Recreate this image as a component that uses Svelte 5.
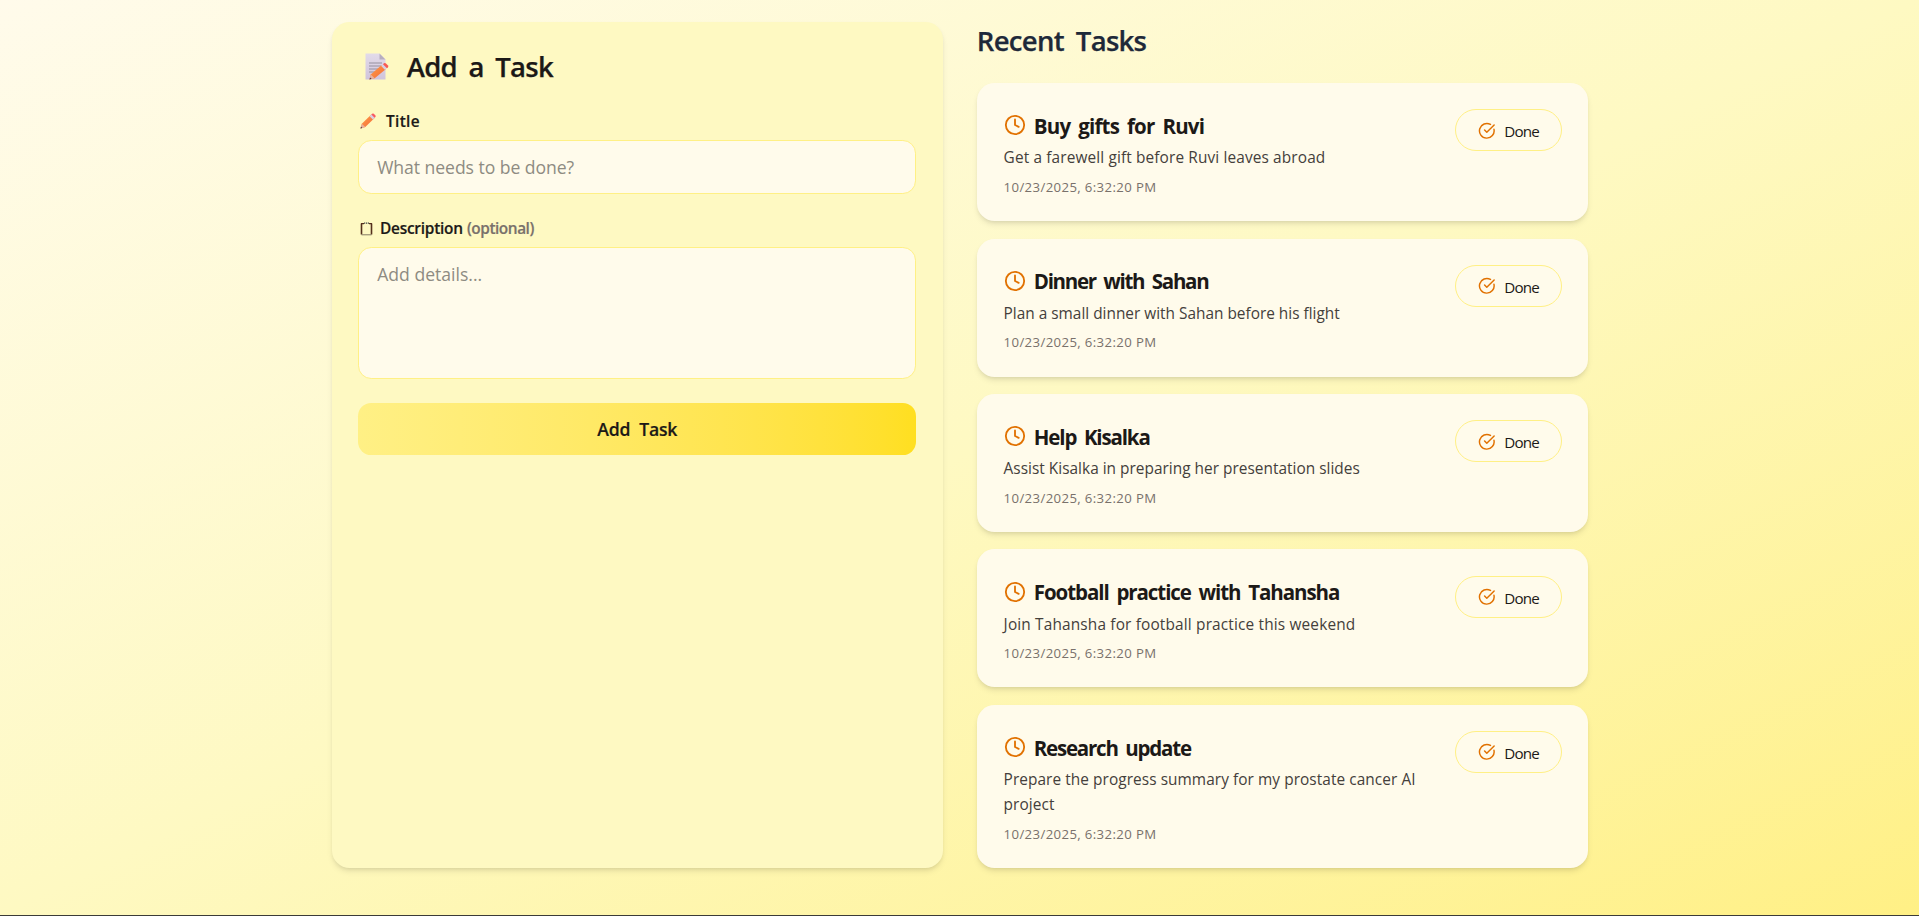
<script>
  const time = '10/23/2025, 6:32:20 PM';
  let tasks = [
    { title: 'Buy gifts for Ruvi', tracking: -0.82, description: 'Get a farewell gift before Ruvi leaves abroad', descTracking: 0.13, time },
    { title: 'Dinner with Sahan', tracking: -1.3, description: 'Plan a small dinner with Sahan before his flight', descTracking: 0, time },
    { title: 'Help Kisalka', tracking: -1.15, description: 'Assist Kisalka in preparing her presentation slides', descTracking: 0.02, time },
    { title: 'Football practice with Tahansha', tracking: -1.07, description: 'Join Tahansha for football practice this weekend', descTracking: 0.16, time },
    { title: 'Research update', tracking: -1.22, description: 'Prepare the progress summary for my prostate cancer AI project', descTracking: 0.07, time }
  ];
  let title = '';
  let description = '';
</script>

<div class="page">
  <main>
    <section class="form-card">
      <h1>
        <svg class="memo" viewBox="0 0 24 27" aria-hidden="true">
          <defs>
            <linearGradient id="wood" x1="0" y1="0" x2="1" y2="1">
              <stop offset="0" stop-color="#ffa044" />
              <stop offset="1" stop-color="#f4683c" />
            </linearGradient>
            <linearGradient id="paper" x1="0" y1="0" x2="0" y2="1">
              <stop offset="0" stop-color="#e2dbe9" />
              <stop offset="1" stop-color="#d0c4dc" />
            </linearGradient>
          </defs>
          <path d="M.5 .5h14l6 6v20H.5z" fill="url(#paper)" />
          <path d="M14.5 .5v6h6z" fill="#b7aebf" />
          <path d="M4 10h13M4 13h13M4 16h11M4 19h6" stroke="#96909f" stroke-width="1" />
          <path d="M4.5 26.5l1.2-5 11-9.5 4 4.2-11 9z" fill="url(#wood)" />
          <path d="M4.5 26.5l1.2-5 4 3.7z" fill="#e5b3a3" />
          <path d="M4.5 26.5l.5-2 1.7 1.2z" fill="#56404a" />
          <path d="M16 12.7l2.2-1.7 3.8 4-2.2 1.8z" fill="#d9cfe2" />
          <path d="M18 11.2l1-.9q1.1-.6 2 .2l2 2.1q.7 1-.1 1.8l-1 .9z" fill="#f85a52" />
        </svg>
        <span>Add a Task</span>
      </h1>

      <label class="title-label" for="title">
        <svg class="pencil" viewBox="0 0 16 16" aria-hidden="true">
          <path d="M.5 15.5l1.3-4.7L11.3 1.6l3.3 3.3-9.3 9z" fill="url(#wood)" />
          <path d="M.5 15.5l1.3-4.7 3.5 3.1z" fill="#e9b29c" />
          <path d="M.5 15.5l.5-1.9 1.4 1.3z" fill="#4f3b45" />
          <path d="M9.6 3.2l2-1.9 3.3 3.3-2 2z" fill="#d9cfe2" />
          <path d="M11.3 1.5l.8-.8q.9-.6 1.7 0l1.7 1.7q.5.8-.1 1.5l-.8.8z" fill="#f85a60" />
        </svg>
        <span>Title</span>
      </label>
      <input id="title" placeholder="What needs to be done?" bind:value={title} />

      <label class="desc-label" for="description">
        <svg class="clipboard" viewBox="0 0 13 14" aria-hidden="true">
          <path d="M1.5 1.5v11M11.5 1.5v11" fill="none" stroke="#55301d" stroke-width="1.6" />
          <path d="M1 1.7h3M9 1.7h3" stroke="#55301d" stroke-width="1.3" />
          <path d="M4 1.2h5" stroke="#3f4545" stroke-width="1.2" stroke-dasharray="1.2 .7" />
          <path d="M1.5 12.8h10" stroke="#837a62" stroke-width="1" />
        </svg>
        <span>Description</span>
        <span class="optional">(optional)</span>
      </label>
      <textarea id="description" placeholder="Add details..." bind:value={description}></textarea>

      <button class="add" type="button">Add Task</button>
    </section>

    <section class="recent">
      <h2>Recent Tasks</h2>
      <ul>
        {#each tasks as task}
          <li>
            <div class="body">
              <h3>
                <svg class="clock" viewBox="0 0 24 24" aria-hidden="true">
                  <circle cx="12" cy="12" r="10" />
                  <path d="M12 6v6l4 2" />
                </svg>
                <span style:letter-spacing="{task.tracking}px">{task.title}</span>
              </h3>
              <p class="description" style:letter-spacing="{task.descTracking}px">{task.description}</p>
              <p class="time">{task.time}</p>
            </div>
            <button class="done" type="button">
              <svg viewBox="0 0 24 24" aria-hidden="true">
                <path d="M21.801 10A10 10 0 1 1 17 3.335" />
                <path d="m9 11 3 3L22 4" />
              </svg>
              <span>Done</span>
            </button>
          </li>
        {/each}
      </ul>
    </section>
  </main>
</div>

<style>
  .page {
    box-sizing: border-box;
    height: 916px;
    padding-top: 22px;
    border-bottom: 1px solid #3b3b38;
    background: linear-gradient(to bottom right in oklab, #fffbeb, #fef9c2, #fff085) padding-box;
    color: #1c1917;
    font-family: "Open Sans", sans-serif;
    font-size: 17.6px;
    overflow: hidden;
  }

  main {
    display: grid;
    grid-template-columns: 1fr 1fr;
    gap: 34px;
    width: 1256px;
    margin: 0 auto;
    padding-left: 0.6px;
  }

  .form-card {
    display: flex;
    flex-direction: column;
    padding: 26.4px;
    border-radius: 17.6px;
    background: #fef9c2;
    box-shadow: 0 4px 6px -1px rgb(0 0 0 / 0.1), 0 2px 4px -2px rgb(0 0 0 / 0.1);
  }

  h1, h2, h3, p, ul {
    margin: 0;
    padding: 0;
  }

  h1 {
    display: flex;
    align-items: center;
    height: 37px;
    margin-bottom: 24.6px;
    padding-left: 7px;
    font-size: 27.5px;
    font-weight: 600;
    line-height: 37px;
    letter-spacing: -0.7px;
    word-spacing: 5px;
    -webkit-text-stroke: 0.25px currentColor;
  }

  .memo {
    width: 24px;
    height: 27px;
    margin-right: 17.5px;
  }

  label {
    display: flex;
    align-items: center;
    height: 22px;
    font-size: 15.4px;
    font-weight: 600;
    line-height: 22px;
    letter-spacing: -0.25px;
    -webkit-text-stroke: 0.2px currentColor;
  }

  label span {
    padding-top: 1.6px;
  }

  .title-label {
    letter-spacing: 0.35px;
  }

  .pencil {
    width: 16px;
    height: 16px;
    margin: 0 9.6px 0 2.2px;
  }

  .clipboard {
    width: 13px;
    height: 14px;
    margin: 2px 7.5px 0 1.4px;
  }

  .optional {
    margin-left: 4.2px;
    color: #79716b;
    letter-spacing: -0.45px;
  }

  input, textarea {
    box-sizing: border-box;
    width: 100%;
    border: 1px solid #fff085;
    border-radius: 13.2px;
    background: #fffbeb;
    color: inherit;
    font: inherit;
    outline: none;
    resize: none;
  }

  input {
    height: 53.8px;
    margin: 8.2px 0 23px;
    padding: 0 18px;
    letter-spacing: -0.06px;
  }

  textarea {
    height: 132.4px;
    margin: 8.1px 0 23.6px;
    padding: 13px 18px;
    line-height: 26px;
  }

  input::placeholder, textarea::placeholder {
    color: #8e8b82;
    opacity: 1;
  }

  button {
    font-family: inherit;
    color: inherit;
  }

  .add {
    height: 52.2px;
    border: 0;
    border-radius: 13.2px;
    background: linear-gradient(to right in oklab, #fff085, #ffdf20);
    font-size: 17.6px;
    font-weight: 600;
    letter-spacing: -0.2px;
    word-spacing: 4.6px;
    -webkit-text-stroke: 0.2px currentColor;
  }

  h2 {
    height: 37.4px;
    margin-bottom: 23.7px;
    color: #1e2939;
    font-size: 27.5px;
    font-weight: 600;
    line-height: 37.4px;
    letter-spacing: -0.7px;
    word-spacing: 5.5px;
    -webkit-text-stroke: 0.25px currentColor;
  }

  ul {
    display: flex;
    flex-direction: column;
    gap: 17.5px;
    list-style: none;
  }

  li {
    display: flex;
    align-items: flex-start;
    justify-content: space-between;
    gap: 17.6px;
    padding: 26.4px 26px 26.4px 26.8px;
    border-radius: 17.6px;
    background: #fffbeb;
    box-shadow: 0 4px 6px -1px rgb(0 0 0 / 0.1), 0 2px 4px -2px rgb(0 0 0 / 0.1);
  }

  h3 {
    display: flex;
    align-items: center;
    gap: 8.2px;
    height: 32px;
    font-size: 20.5px;
    font-weight: 700;
    line-height: 32px;
    word-spacing: 3.5px;
  }

  h3 span {
    padding-top: 1px;
  }

  .clock {
    flex: none;
    width: 22px;
    height: 22px;
  }

  .clock, .done svg {
    fill: none;
    stroke: #e17100;
    stroke-width: 2;
    stroke-linecap: round;
    stroke-linejoin: round;
  }

  .description {
    max-width: 425px;
    margin-top: 3.8px;
    color: #44403b;
    font-size: 15.4px;
    line-height: 25px;
  }

  .time {
    margin-top: 8.4px;
    color: #79716b;
    font-size: 13.2px;
    line-height: 16px;
    letter-spacing: 0.37px;
  }

  .done {
    display: flex;
    flex: none;
    align-items: center;
    gap: 8.8px;
    box-sizing: border-box;
    width: 107px;
    height: 41.8px;
    padding: 0 0 0 22px;
    border: 1px solid #fff085;
    border-radius: 21px;
    background: #fffbeb;
    font-size: 15.2px;
    letter-spacing: -0.8px;
  }

  .done span {
    padding-top: 1.6px;
  }

  .done svg {
    width: 17.6px;
    height: 17.6px;
  }
</style>
